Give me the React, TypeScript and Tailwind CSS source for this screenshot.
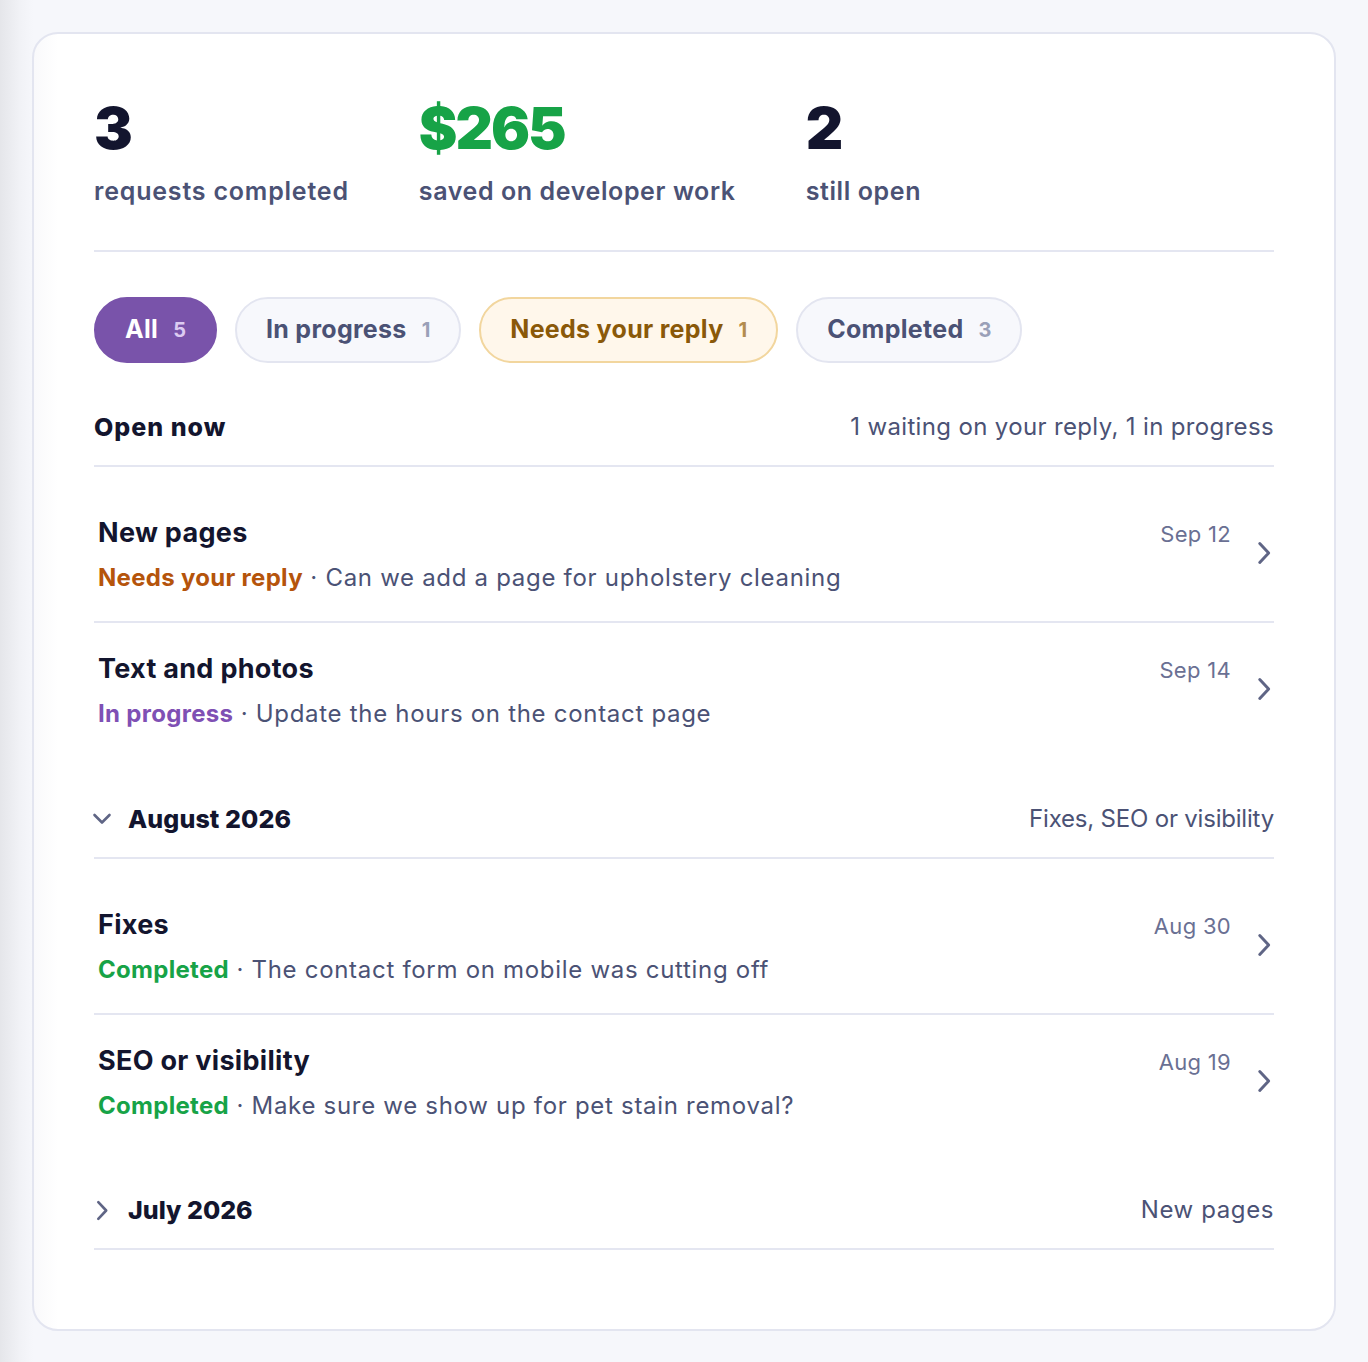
import React from "react";

const FONT = { fontFamily: "Inter, 'Noto Sans', sans-serif" };

function ChevronRight({ className = "" }: { className?: string }) {
  return (
    <svg viewBox="0 0 16 20" className={className} fill="none" stroke="currentColor" strokeWidth={2.5} strokeLinecap="round" strokeLinejoin="round">
      <path d="M4 2L11.5 10L4 18" />
    </svg>
  );
}

function ChevronDown({ className = "" }: { className?: string }) {
  return (
    <svg viewBox="0 0 20 16" className={className} fill="none" stroke="currentColor" strokeWidth={2.6} strokeLinecap="round" strokeLinejoin="round">
      <path d="M2.5 4L10 11.5L17.5 4" />
    </svg>
  );
}

type Row = { title: string; status: string; statusClass: string; text: string; date: string; border: boolean };

function RequestRow({ r }: { r: Row }) {
  return (
    <div className={`flex items-start justify-between pl-1 pt-[27px] pb-[24px] ${r.border ? "border-b-2 border-[#e4e6f1]" : ""}`}>
      <div className="flex flex-col gap-[7px]">
        <div className="text-[27px] leading-[38px] font-bold text-[#13152e] tracking-[0.3px]">{r.title}</div>
        <div className="text-[24px] leading-[38px] text-[#4b5275] tracking-[0.7px]">
          <span className={`font-bold tracking-[0.3px] ${r.statusClass}`}>{r.status}</span>
          <span> · {r.text}</span>
        </div>
      </div>
      <div className="flex items-start gap-[24px]">
        <span className="text-[22px] leading-[32px] mt-[4px] text-[#6a7093] tracking-[0.3px]">{r.date}</span>
        <ChevronRight className="w-[19px] h-[24px] mt-[27px] text-[#5f6585]" />
      </div>
    </div>
  );
}

function SectionHeader({
  title,
  right,
  icon,
  titleCls,
  rightCls,
}: {
  title: string;
  right: string;
  icon?: "down" | "right";
  titleCls: string;
  rightCls: string;
}) {
  return (
    <div className="flex items-center justify-between pt-[24px] pb-[20px] border-b-2 border-[#e4e6f1]">
      <div className="flex items-center">
        {icon === "down" && <ChevronDown className="w-[20px] h-[16px] -ml-[2px] mr-[16px] text-[#5f6585]" />}
        {icon === "right" && <ChevronRight className="w-[17px] h-[21px] mr-[17px] text-[#5f6585]" />}
        <span className={`text-[25px] leading-[36px] font-extrabold text-[#13152e] ${titleCls}`}>{title}</span>
      </div>
      <span className={`text-[24px] leading-[36px] text-[#4b5275] ${rightCls}`}>{right}</span>
    </div>
  );
}

function Pill({ label, count, variant }: { label: string; count: string; variant: "active" | "gray" | "amber" }) {
  const cls =
    variant === "active"
      ? "bg-[#7953aa] border-[#7953aa] text-white"
      : variant === "amber"
      ? "bg-[#fff7eb] border-[#f2d69e] text-[#8a5909]"
      : "bg-[#f7f8fc] border-[#e3e5f0] text-[#4b5275]";
  const countCls = variant === "active" ? "text-[#dccbf2]" : variant === "amber" ? "text-[#b38c4e]" : "text-[#9aa0b8]";
  return (
    <div className={`h-[66px] px-[29px] rounded-full border-2 flex items-center gap-[15px] ${cls}`}>
      <span className="text-[25px] font-bold tracking-[0.3px]">{label}</span>
      <span className={`text-[20px] font-bold ${countCls}`}>{count}</span>
    </div>
  );
}

export default function App() {
  const open: Row[] = [
    { title: "New pages", status: "Needs your reply", statusClass: "text-[#b5540b]", text: "Can we add a page for upholstery cleaning", date: "Sep 12", border: true },
    { title: "Text and photos", status: "In progress", statusClass: "text-[#7f50b4]", text: "Update the hours on the contact page", date: "Sep 14", border: false },
  ];
  const aug: Row[] = [
    { title: "Fixes", status: "Completed", statusClass: "text-[#17a347]", text: "The contact form on mobile was cutting off", date: "Aug 30", border: true },
    { title: "SEO or visibility", status: "Completed", statusClass: "text-[#17a347]", text: "Make sure we show up for pet stain removal?", date: "Aug 19", border: false },
  ];
  return (
    <div style={FONT} className="min-h-[1362px] bg-[linear-gradient(to_right,#e5e6ea,#f1f2f6_20px,#f6f7fb_33px)] pt-[32px] pl-[32px] pr-[32px] pb-[30px]">
      <div className="rounded-[26px] border-2 border-[#e3e5f0] bg-[linear-gradient(to_right,#f9f9fb,#ffffff_24px)] px-[60px] pt-[62px] pb-[79px]">
        {/* Stats */}
        <div className="flex gap-[70px] pb-[42px] border-b-2 border-[#e4e6f1]">
          <div className="flex flex-col">
            <span className="text-[58px] leading-[64px] font-black text-[#13152e] tracking-[-2px]">3</span>
            <span className="text-[25px] leading-[34px] font-semibold text-[#4b5275] mt-[14px] tracking-[0.8px]">requests completed</span>
          </div>
          <div className="flex flex-col">
            <span className="text-[58px] leading-[64px] font-black text-[#17a347] tracking-[-2px]">$265</span>
            <span className="text-[25px] leading-[34px] font-semibold text-[#4b5275] mt-[14px] tracking-[0.6px]">saved on developer work</span>
          </div>
          <div className="flex flex-col">
            <span className="text-[58px] leading-[64px] font-black text-[#13152e] tracking-[-2px]">2</span>
            <span className="text-[25px] leading-[34px] font-semibold text-[#4b5275] mt-[14px] tracking-[0.6px]">still open</span>
          </div>
        </div>

        {/* Tabs */}
        <div className="flex gap-[18px] pt-[45px] pb-[22px]">
          <Pill label="All" count="5" variant="active" />
          <Pill label="In progress" count="1" variant="gray" />
          <Pill label="Needs your reply" count="1" variant="amber" />
          <Pill label="Completed" count="3" variant="gray" />
        </div>

        <SectionHeader title="Open now" right="1 waiting on your reply, 1 in progress" titleCls="tracking-[1px]" rightCls="tracking-[0.35px]" />
        <div className="py-[20px]">
          {open.map((r) => (
            <RequestRow key={r.title} r={r} />
          ))}
        </div>

        <SectionHeader title="August 2026" right="Fixes, SEO or visibility" icon="down" titleCls="tracking-[0.1px]" rightCls="tracking-[-0.2px]" />
        <div className="pt-[20px] pb-[19px]">
          {aug.map((r) => (
            <RequestRow key={r.title} r={r} />
          ))}
        </div>

        <SectionHeader title="July 2026" right="New pages" icon="right" titleCls="tracking-[0px]" rightCls="tracking-[0.6px]" />
      </div>
    </div>
  );
}
